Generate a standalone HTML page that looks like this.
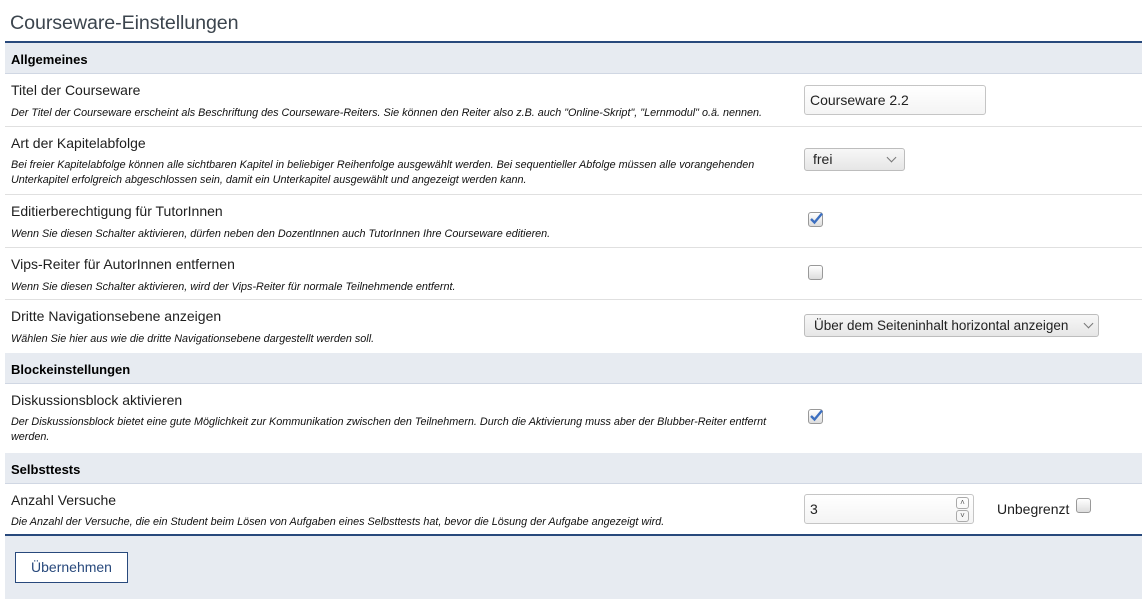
<!DOCTYPE html>
<html><head><meta charset="utf-8"><style>
*{margin:0;padding:0;box-sizing:border-box}
body{width:1142px;height:611px;background:#fff;font-family:"Liberation Sans",sans-serif;color:#000;position:relative;overflow:hidden}
.a{position:absolute}
h1{position:absolute;left:10px;top:12px;font-size:19.7px;font-weight:normal;color:#3c454e;letter-spacing:-0.1px}
.sec{position:absolute;left:5px;width:1137px;height:31px;background:#e7ebf1;border-bottom:1px solid #d0d7e3;font-weight:bold;font-size:13px;padding:9px 0 0 6px;color:#000}
.row{position:absolute;left:5px;width:1137px;border-bottom:1px solid #e0e0e0}
.lab{position:absolute;left:6px;font-size:14px;color:#1e1e1e}
.desc{position:absolute;left:6px;font-size:10.8px;font-style:italic;line-height:15px;color:#111;width:782px}
.inp{position:absolute;border:1px solid #c5c5c5;border-radius:3px;background:linear-gradient(#fff,#f4f4f4);font-size:14px;padding-left:5px;color:#222}
.sel{position:absolute;border:1px solid #bdbdbd;border-radius:3px;background:linear-gradient(#f7f7f7,#e6e6e6);font-size:14px;color:#222}
.cb{position:absolute;width:15px;height:15px;border:1px solid #999;border-radius:3px;background:linear-gradient(#fff,#ddd)}
.chev{position:absolute;width:7px;height:7px;border-right:1.3px solid #777;border-bottom:1.3px solid #777;transform:rotate(45deg)}
</style></head><body>
<h1>Courseware-Einstellungen</h1>
<div class="a" style="left:5px;top:41px;width:1137px;height:2px;background:#28497c"></div>

<div class="sec" style="top:43px">Allgemeines</div>

<div class="row" style="top:74px;height:53px">
<div class="lab" style="top:8px">Titel der Courseware</div>
<div class="desc" style="top:32px">Der Titel der Courseware erscheint als Beschriftung des Courseware-Reiters. Sie können den Reiter also z.B. auch "Online-Skript", "Lernmodul" o.ä. nennen.</div>
<div class="inp" style="left:799px;top:11px;width:182px;height:30px;line-height:28px">Courseware 2.2</div>
</div>

<div class="row" style="top:127px;height:68px">
<div class="lab" style="top:8px">Art der Kapitelabfolge</div>
<div class="desc" style="top:31px">Bei freier Kapitelabfolge können alle sichtbaren Kapitel in beliebiger Reihenfolge ausgewählt werden. Bei sequentieller Abfolge müssen alle vorangehenden Unterkapitel erfolgreich abgeschlossen sein, damit ein Unterkapitel ausgewählt und angezeigt werden kann.</div>
<div class="sel" style="left:799px;top:21px;width:101px;height:23px;line-height:21px;padding-left:8px">frei<div class="chev" style="left:83px;top:5px"></div></div>
</div>

<div class="row" style="top:195px;height:53px">
<div class="lab" style="top:8px">Editierberechtigung für TutorInnen</div>
<div class="desc" style="top:32px">Wenn Sie diesen Schalter aktivieren, dürfen neben den DozentInnen auch TutorInnen Ihre Courseware editieren.</div>
<div class="cb" style="left:803px;top:17px"><svg width="15" height="15" class="a" style="left:-1px;top:-2px"><path d="M3 8 L6.5 11.5 L14 2.5" fill="none" stroke="#3c6fc0" stroke-width="2.4"/></svg></div>
</div>

<div class="row" style="top:248px;height:52px">
<div class="lab" style="top:8px">Vips-Reiter für AutorInnen entfernen</div>
<div class="desc" style="top:32px">Wenn Sie diesen Schalter aktivieren, wird der Vips-Reiter für normale Teilnehmende entfernt.</div>
<div class="cb" style="left:803px;top:17px"></div>
</div>

<div class="row" style="top:300px;height:53px;border-bottom:none">
<div class="lab" style="top:8px">Dritte Navigationsebene anzeigen</div>
<div class="desc" style="top:32px">Wählen Sie hier aus wie die dritte Navigationsebene dargestellt werden soll.</div>
<div class="sel" style="left:799px;top:14px;width:295px;height:23px;line-height:21px;padding-left:9px;font-size:13.5px">Über dem Seiteninhalt horizontal anzeigen<div class="chev" style="left:280px;top:5px"></div></div>
</div>

<div class="sec" style="top:353px">Blockeinstellungen</div>

<div class="row" style="top:384px;height:69px;border-bottom:none">
<div class="lab" style="top:8px">Diskussionsblock aktivieren</div>
<div class="desc" style="top:31px">Der Diskussionsblock bietet eine gute Möglichkeit zur Kommunikation zwischen den Teilnehmern. Durch die Aktivierung muss aber der Blubber-Reiter entfernt werden.</div>
<div class="cb" style="left:803px;top:25px"><svg width="15" height="15" class="a" style="left:-1px;top:-2px"><path d="M3 8 L6.5 11.5 L14 2.5" fill="none" stroke="#3c6fc0" stroke-width="2.4"/></svg></div>
</div>

<div class="sec" style="top:453px">Selbsttests</div>

<div class="row" style="top:484px;height:51px;border-bottom:none">
<div class="lab" style="top:8px">Anzahl Versuche</div>
<div class="desc" style="top:31px">Die Anzahl der Versuche, die ein Student beim Lösen von Aufgaben eines Selbsttests hat, bevor die Lösung der Aufgabe angezeigt wird.</div>
<div class="inp" style="left:799px;top:10px;width:170px;height:30px;line-height:28px;padding-left:5px">3
<div class="a" style="left:151px;top:2px;width:13px;height:12px;border:1px solid #aaa;border-radius:3px;font-size:8px;line-height:9px;text-align:center;color:#555">˄</div>
<div class="a" style="left:151px;top:15px;width:13px;height:12px;border:1px solid #aaa;border-radius:3px;font-size:8px;line-height:9px;text-align:center;color:#555">˅</div>
</div>
<div class="a" style="left:992px;top:17px;font-size:14px;color:#1e1e1e">Unbegrenzt</div>
<div class="cb" style="left:1071px;top:14px"></div>
</div>

<div class="a" style="left:5px;top:534px;width:1137px;height:2px;background:#28497c"></div>
<div class="a" style="left:5px;top:536px;width:1137px;height:63px;background:#e7ebf1"></div>
<div class="a" style="left:15px;top:552px;width:113px;height:31px;border:1px solid #28497c;background:#fff;color:#28497c;font-size:14px;text-align:center;line-height:29px">Übernehmen</div>
</body></html>
